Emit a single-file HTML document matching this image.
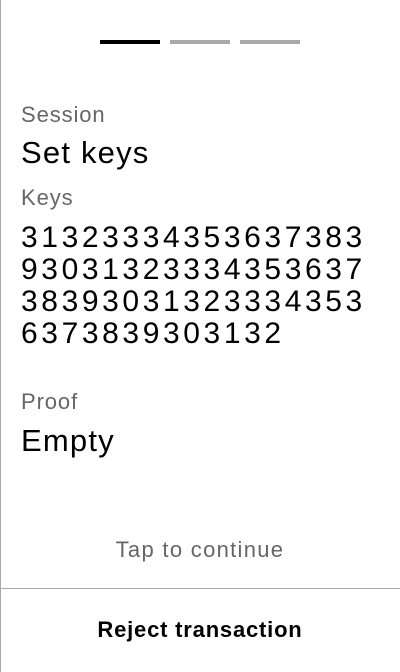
<!DOCTYPE html>
<html><head><style>
body{margin:0;width:400px;height:672px;background:#fff;position:relative;overflow:hidden;font-family:"Liberation Sans",sans-serif;}
.lb{position:absolute;left:0;top:0;width:1px;height:672px;background:#aaa}
.bar{position:absolute;top:40px;height:4px;width:60px;background:#aaa}
.t{position:absolute;left:21px;white-space:nowrap}
.lab{font-size:22px;color:#666;letter-spacing:0.9px}
.val{font-size:31px;color:#000;letter-spacing:1.2px}
.key{font-size:30px;color:#000;letter-spacing:3.6px;line-height:32px}
</style></head><body>
<div class="lb"></div>
<div class="bar" style="left:100px;background:#000"></div>
<div class="bar" style="left:170px"></div>
<div class="bar" style="left:240px"></div>
<div class="t lab" style="top:102px">Session</div>
<div class="t val" style="top:135px">Set keys</div>
<div class="t lab" style="top:185px">Keys</div>
<div class="t key" style="top:222px">31323334353637383<br>93031323334353637<br>38393031323334353<br>6373839303132</div>
<div class="t lab" style="top:389px">Proof</div>
<div class="t val" style="top:423px">Empty</div>
<div style="position:absolute;left:0;width:400px;top:537px;text-align:center;font-size:22px;letter-spacing:1.3px;color:#666">Tap to continue</div>
<div style="position:absolute;left:0;top:588px;width:400px;height:1px;background:#aaa"></div>
<div style="position:absolute;left:0;width:400px;top:617px;text-align:center;font-size:22px;letter-spacing:0.8px;font-weight:bold;color:#000">Reject transaction</div>
</body></html>
